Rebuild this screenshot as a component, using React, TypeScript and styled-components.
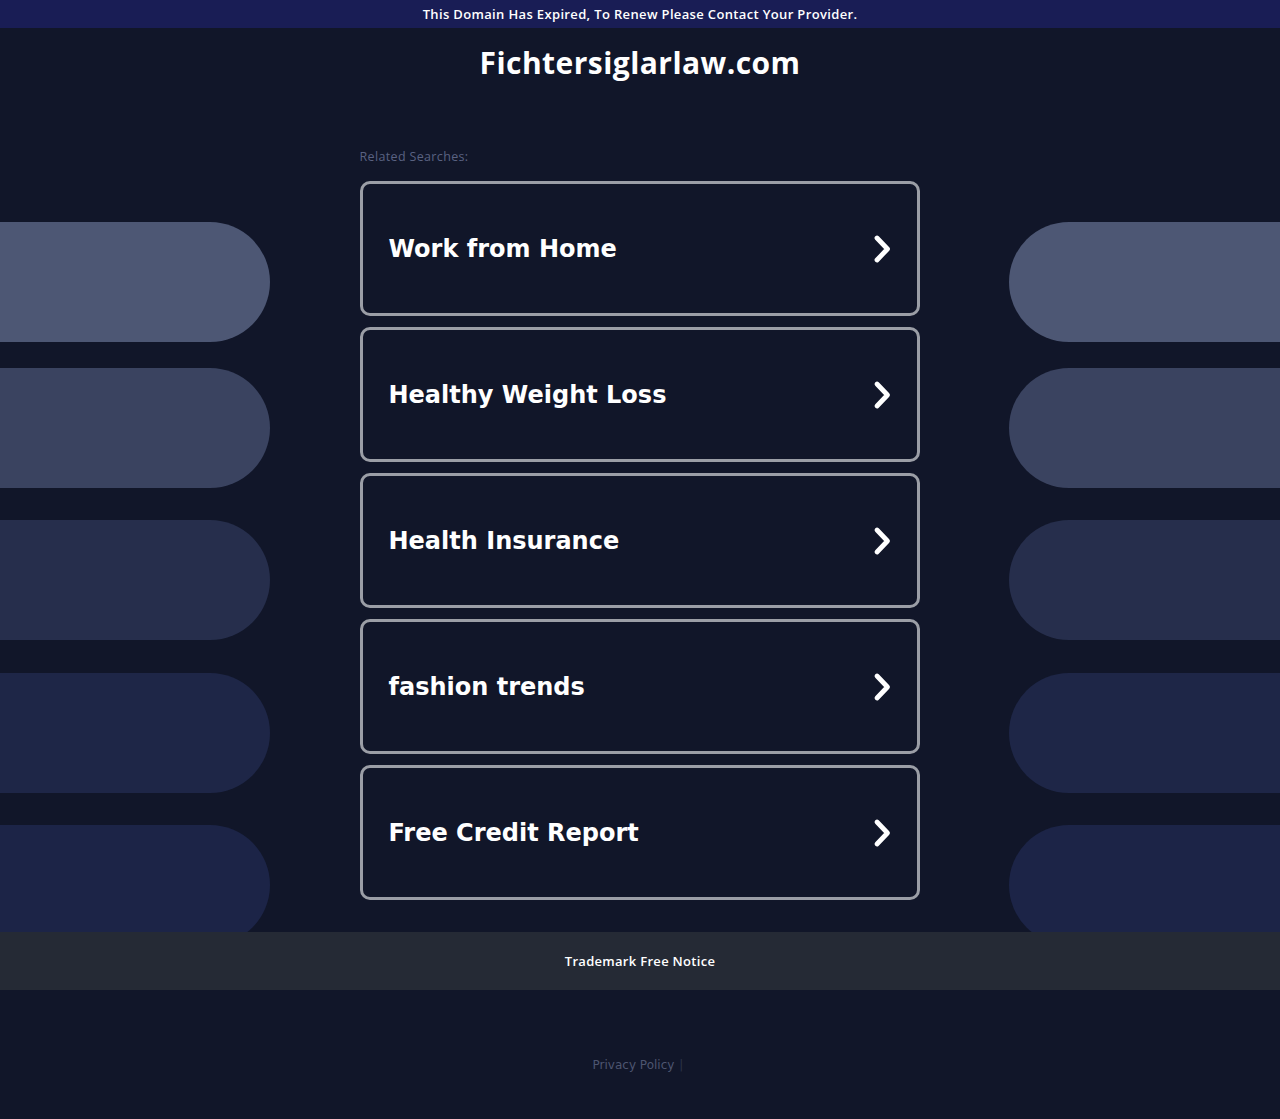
import styled, { createGlobalStyle } from 'styled-components';

const GlobalStyle = createGlobalStyle`
  html, body {
    margin: 0;
    padding: 0;
    background: #111629;
  }
`;

const searches = [
  'Work from Home',
  'Healthy Weight Loss',
  'Health Insurance',
  'fashion trends',
  'Free Credit Report',
];

// decorative bars on both sides, lightest on top
const bars = [
  { color: '#4d5774', top: 122 },
  { color: '#3a4360', top: 26 },
  { color: '#262e4c', top: 32 },
  { color: '#1e2647', top: 33 },
  { color: '#1c2447', top: 32 },
];

const PageStyled = styled.div`
  min-height: 1119px;
  background: #111629;
  display: flex;
  flex-direction: column;
`;

const NoticeBarStyled = styled.div`
  height: 28px;
  background: #191d55;
  color: #ffffff;
  font-family: 'Open Sans', sans-serif;
  font-size: 13px;
  font-weight: 600;
  letter-spacing: 0.35px;
  display: flex;
  align-items: center;
  justify-content: center;
`;

const DomainTitleStyled = styled.h1`
  margin: 0;
  height: 72px;
  padding-top: 16px;
  box-sizing: border-box;
  text-align: center;
  color: #ffffff;
  font-family: 'Open Sans', sans-serif;
  font-size: 30px;
  line-height: 38px;
  font-weight: 700;
  letter-spacing: 0.45px;
`;

const MainStyled = styled.div`
  display: grid;
  grid-template-columns: 270px 1fr 271px;
  height: 832px;
  overflow: hidden;
`;

const SideColumnStyled = styled.div`
  display: flex;
  flex-direction: column;
  overflow: hidden;
`;

const BarStyled = styled.div<{ $color: string; $top: number; $side: 'left' | 'right' }>`
  flex: 0 0 120px;
  height: 120px;
  margin-top: ${p => p.$top}px;
  background: ${p => p.$color};
  border-radius: ${p => (p.$side === 'left' ? '0 60px 60px 0' : '60px 0 0 60px')};
`;

const CenterStyled = styled.div`
  display: flex;
  flex-direction: column;
  align-items: center;
`;

const ListStyled = styled.div`
  width: 560px;
  display: flex;
  flex-direction: column;
  gap: 11px;
`;

const LabelStyled = styled.div`
  margin-top: 49px;
  margin-bottom: 5px;
  color: #5a6282;
  font-family: 'Open Sans', sans-serif;
  font-size: 12.5px;
  letter-spacing: 0.35px;
  line-height: 16px;
`;

const CardStyled = styled.a`
  height: 135px;
  box-sizing: border-box;
  border: 3px solid #9b9ea6;
  border-radius: 10px;
  background: #111629;
  padding: 0 23px 0 26px;
  display: flex;
  align-items: center;
  justify-content: space-between;
  text-decoration: none;
  color: #ffffff;
  cursor: pointer;
`;

const CardTextStyled = styled.span`
  font-family: 'DejaVu Sans', Verdana, sans-serif;
  font-weight: 700;
  font-size: 24px;
`;

const FooterBandStyled = styled.div`
  height: 58px;
  background: #252a35;
  color: #ffffff;
  font-family: 'Open Sans', sans-serif;
  font-size: 13px;
  font-weight: 600;
  letter-spacing: 0.3px;
  display: flex;
  align-items: center;
  justify-content: center;
`;

const BottomStyled = styled.div`
  padding-top: 67px;
  padding-right: 4px;
  text-align: center;
  font-family: 'DejaVu Sans', sans-serif;
  font-size: 12px;
  line-height: 16px;
  color: #4d5570;
`;

const DividerStyled = styled.span`
  color: #2c3248;
  margin-left: 5px;
`;

const Chevron = () => (
  <svg width="22" height="32" viewBox="0 0 22 32">
    <polyline
      points="5,5 15.5,16 5,27"
      fill="none"
      stroke="#ffffff"
      strokeWidth="4.8"
      strokeLinecap="round"
      strokeLinejoin="round"
    />
  </svg>
);

const SideColumn = ({ side }: { side: 'left' | 'right' }) => (
  <SideColumnStyled>
    {bars.map((b, i) => (
      <BarStyled key={i} $color={b.color} $top={b.top} $side={side} />
    ))}
  </SideColumnStyled>
);

const App = () => (
  <PageStyled>
    <GlobalStyle />
    <NoticeBarStyled>This Domain Has Expired, To Renew Please Contact Your Provider.</NoticeBarStyled>
    <DomainTitleStyled>Fichtersiglarlaw.com</DomainTitleStyled>
    <MainStyled>
      <SideColumn side="left" />
      <CenterStyled>
        <ListStyled>
          <LabelStyled>Related Searches:</LabelStyled>
          {searches.map(s => (
            <CardStyled key={s}>
              <CardTextStyled>{s}</CardTextStyled>
              <Chevron />
            </CardStyled>
          ))}
        </ListStyled>
      </CenterStyled>
      <SideColumn side="right" />
    </MainStyled>
    <FooterBandStyled>Trademark Free Notice</FooterBandStyled>
    <BottomStyled>
      Privacy Policy<DividerStyled>|</DividerStyled>
    </BottomStyled>
  </PageStyled>
);

export default App;
